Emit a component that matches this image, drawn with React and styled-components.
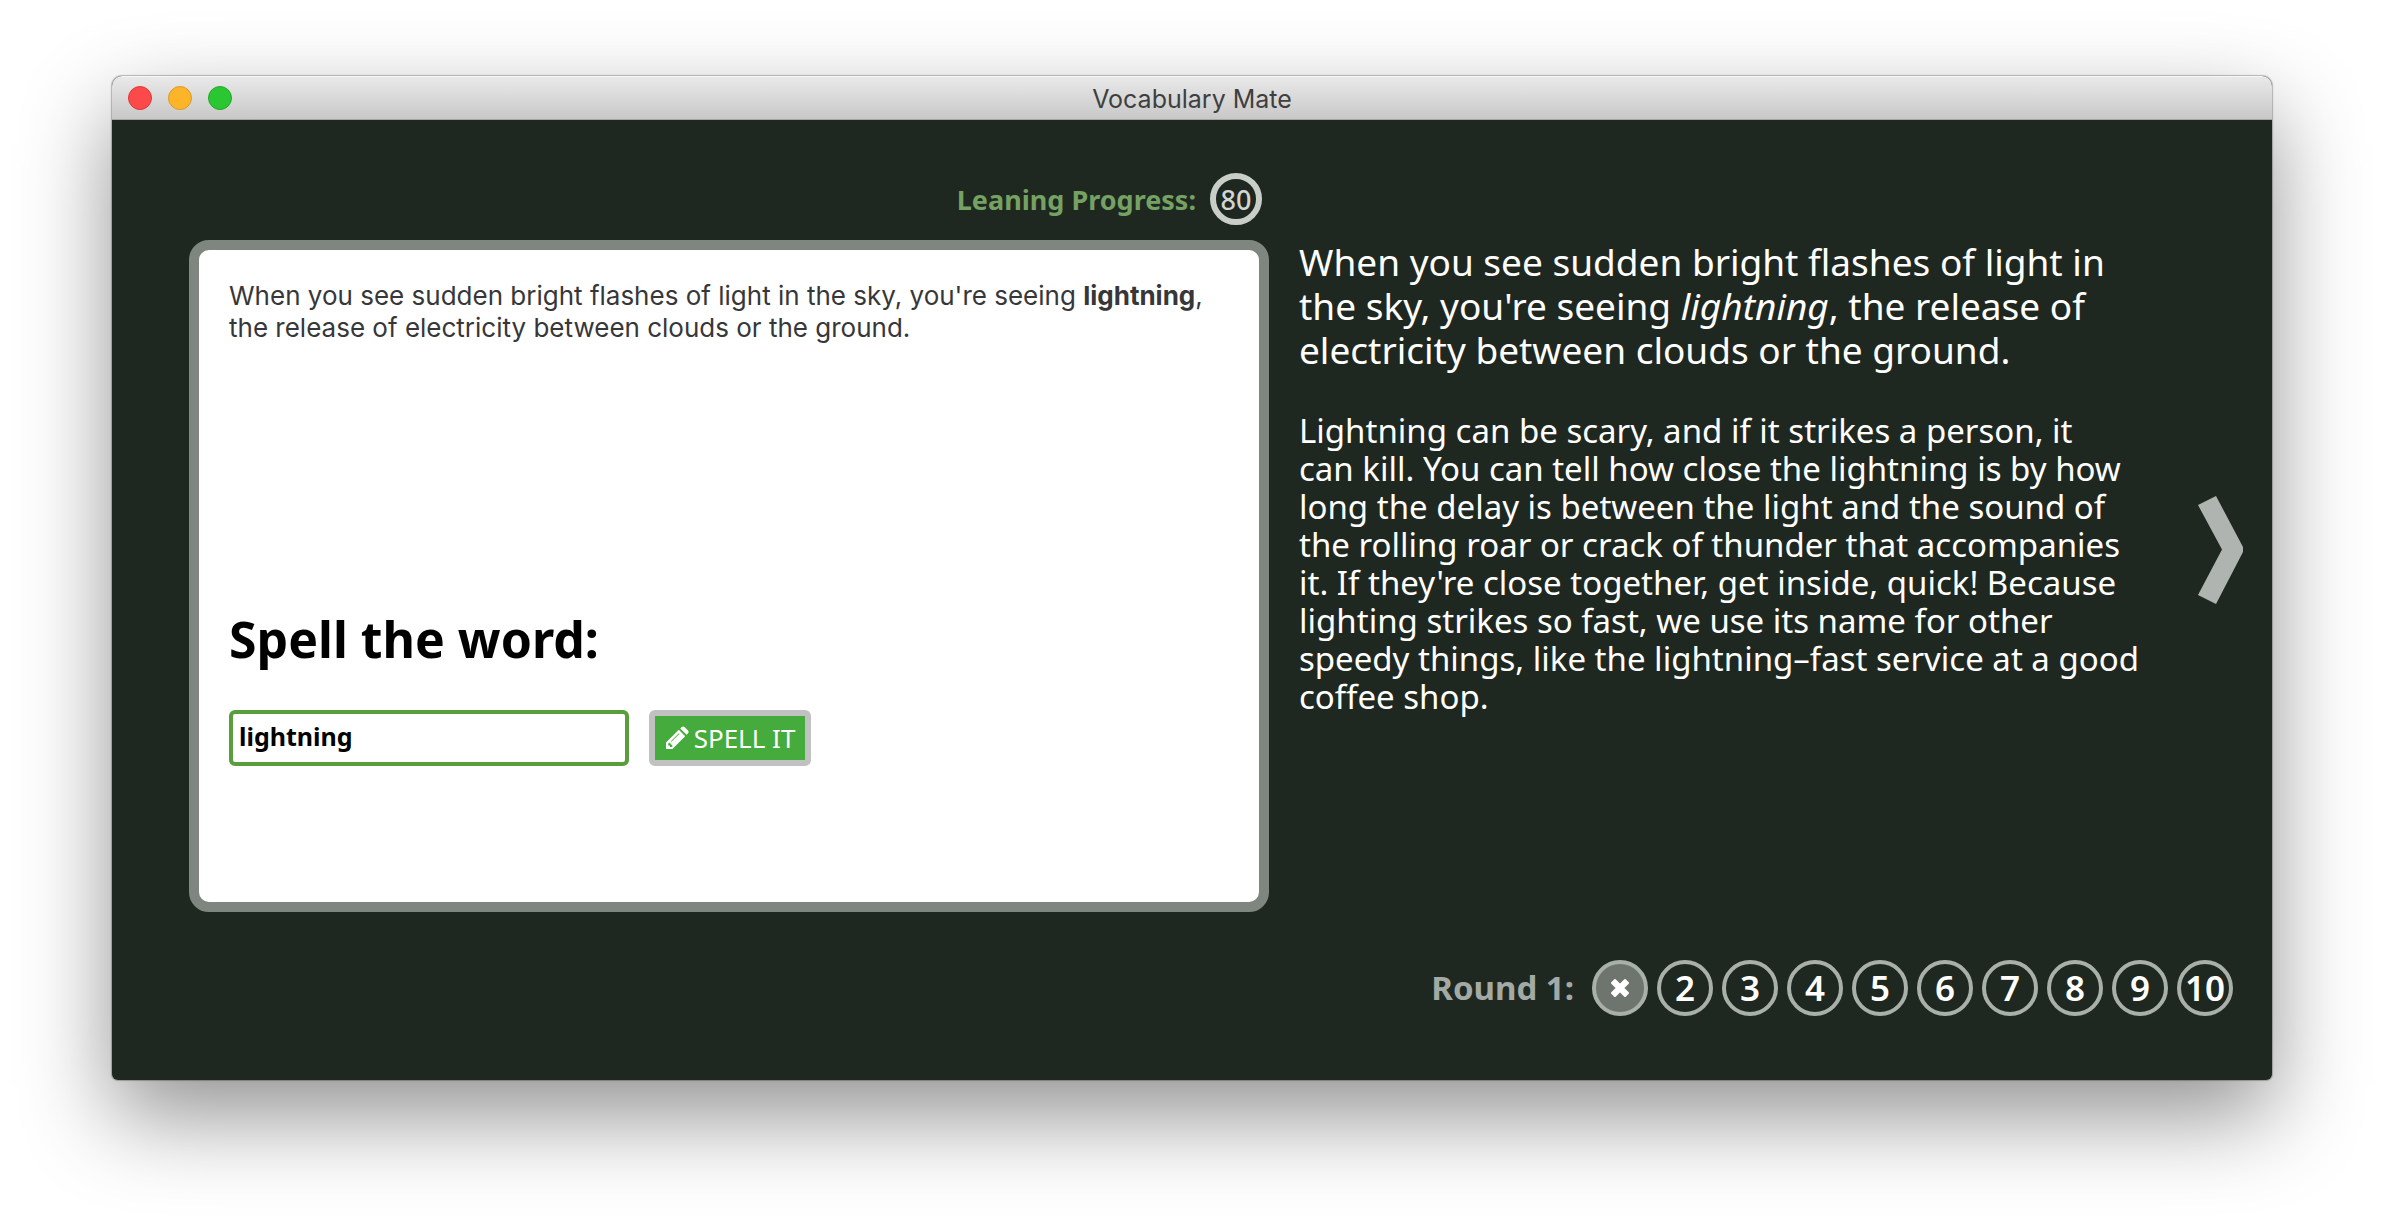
import React, { useState } from "react";
import styled, { createGlobalStyle } from "styled-components";

const GlobalStyle = createGlobalStyle`
  *, *::before, *::after { box-sizing: border-box; }
  body {
    margin: 0;
    background: #ffffff;
    font-family: "Noto Sans", "Open Sans", sans-serif;
  }
  h1, h2, p { margin: 0; }
`;

const Desktop = styled.div`
  min-height: 100vh;
  padding: 76px 112px 148px;
  display: flex;
`;

const Window = styled.main`
  flex: 1;
  min-width: 0;
  display: flex;
  flex-direction: column;
  overflow: hidden;
  border-radius: 10px 10px 6px 6px;
  background: #1f2820;
  box-shadow: 0 0 1px 1px rgba(0, 0, 0, 0.25), 0 36px 90px rgba(0, 0, 0, 0.43);
`;

const TitleBar = styled.header`
  height: 44px;
  padding: 0 16px;
  display: grid;
  grid-template-columns: 1fr auto 1fr;
  align-items: center;
  background: linear-gradient(#e9e9e9, #c8c8c8);
  border-top: 1px solid #f6f6f6;
  border-bottom: 1px solid #a4a4a4;
`;

const WindowButtons = styled.div`
  display: flex;
  gap: 16px;
`;

const WindowButton = styled.button`
  width: 24px;
  height: 24px;
  padding: 0;
  border: 1px solid ${(p) => p.$edge};
  border-radius: 50%;
  background: ${(p) => p.$fill};
`;

const Title = styled.h1`
  padding-top: 2px;
  font: 400 25px/40px Inter, sans-serif;
  color: #3f3f3f;
`;

const Body = styled.div`
  flex: 1;
  padding: 53px 29px 64px 77px;
  display: grid;
  grid-template-columns: minmax(0, 1080fr) minmax(0, 869fr) 45px;
  grid-template-rows: auto 1fr auto;
  column-gap: 30px;
`;

const Progress = styled.div`
  grid-column: 1;
  padding-right: 7px;
  margin-bottom: 15px;
  display: flex;
  justify-content: flex-end;
  align-items: center;
  gap: 14px;
  font-size: 27px;
  font-weight: 700;
  color: #75a163;
`;

const ProgressValue = styled.output`
  width: 52px;
  height: 52px;
  display: grid;
  place-items: center;
  border: 6px solid #c9cec9;
  border-radius: 50%;
  font-weight: 500;
  color: #d2d6d2;
`;

const Card = styled.section`
  grid-row: 2;
  grid-column: 1;
  padding: 30px 30px 136px;
  display: flex;
  flex-direction: column;
  justify-content: space-between;
  border: 10px solid #7f867f;
  border-radius: 20px;
  background: #ffffff;
`;

const Example = styled.p`
  font: 400 26px/32px Inter, sans-serif;
  color: #37373a;
`;

const SpellForm = styled.form`
  display: flex;
  flex-direction: column;
  gap: 36px;
`;

const Prompt = styled.label`
  font-size: 50px;
  line-height: 70px;
  font-weight: 700;
  color: #000000;
`;

const Controls = styled.div`
  display: flex;
  gap: 20px;
`;

const WordInput = styled.input`
  width: 400px;
  height: 56px;
  padding: 0 6px 4px;
  border: 4px solid #5a9e3c;
  border-radius: 6px;
  outline: none;
  background: #ffffff;
  font: 700 25px/32px "Noto Sans", "Open Sans", sans-serif;
  color: #000000;
`;

const SpellButton = styled.button`
  width: 162px;
  height: 56px;
  padding: 0;
  display: flex;
  justify-content: center;
  align-items: center;
  gap: 5px;
  border: 6px solid #c1c1c1;
  border-radius: 6px;
  background: #46ab3d;
  font: 400 26px/32px "Noto Sans", "Open Sans", sans-serif;
  color: #ffffff;
`;

const Explanation = styled.section`
  grid-row: 2;
  grid-column: 2;
  padding-right: 12px;
  display: flex;
  flex-direction: column;
  gap: 40px;
  color: #ffffff;
`;

const Lead = styled.p`
  font-size: 37px;
  line-height: 44px;
`;

const Detail = styled.p`
  font-size: 33px;
  line-height: 38px;
`;

const NextButton = styled.button`
  grid-row: 2;
  grid-column: 3;
  align-self: center;
  margin-bottom: 52px;
  padding: 0;
  border: 0;
  background: none;
  line-height: 0;
`;

const Rounds = styled.footer`
  grid-column: 1 / -1;
  margin-top: 48px;
  padding-right: 10px;
  display: flex;
  justify-content: flex-end;
  align-items: center;
  gap: 18px;
  font-size: 33px;
  line-height: 44px;
  font-weight: 700;
  color: #a3a9a4;
`;

const RoundList = styled.ol`
  margin: 0;
  padding: 0;
  display: flex;
  gap: 9px;
  list-style: none;
`;

const RoundItem = styled.li`
  width: 56px;
  height: 56px;
  display: flex;
  justify-content: center;
  align-items: center;
  border: 4px solid #a9afa9;
  border-radius: 50%;
  background: ${(p) => (p.$missed ? "#6d756e" : "transparent")};
  font-size: 35px;
  font-weight: 600;
  color: #ffffff;
`;

const Pencil = () => (
  <svg width="24" height="24" viewBox="0 0 24 24" aria-hidden="true">
    <path
      fill="#fff"
      fillRule="evenodd"
      d="M1 16.6 13.8 3.8l6.4 6.4L7.4 23H1zM3.2 17.8v1.6h1.7v1.7h1.6l1.2-1.2-3.3-3.3zM13.9 7.2l-8 8 .6.6 8-8zM15.2 2.4 16.700 1q1.400-1.200 2.800 0L23 4.500q1.200 1.400 0 2.800l-1.400 1.500z"
    />
  </svg>
);

const Cross = () => (
  <svg width="20" height="20" viewBox="0 0 20 20" aria-hidden="true">
    <path
      fill="#fff"
      stroke="#fff"
      strokeWidth="2"
      strokeLinejoin="round"
      d="M5 2 10 7 15 2 18 5 13 10 18 15 15 18 10 13 5 18 2 15 7 10 2 5z"
    />
  </svg>
);

const Chevron = () => (
  <svg width="45" height="110" viewBox="0 0 45 110" aria-hidden="true">
    <path fill="#afb4b0" d="M0 10 18 1 45 52v5L18 109 0 100 24 54.500z" />
  </svg>
);

const rounds = [1, 2, 3, 4, 5, 6, 7, 8, 9, 10];

export default function App() {
  const [word, setWord] = useState("lightning");

  return (
    <>
      <GlobalStyle />
      <Desktop>
        <Window>
          <TitleBar>
            <WindowButtons>
              <WindowButton aria-label="Close" $fill="#fc4a4a" $edge="#dc3838" />
              <WindowButton aria-label="Minimize" $fill="#fdb429" $edge="#d99a2b" />
              <WindowButton aria-label="Zoom" $fill="#2bc732" $edge="#25a82b" />
            </WindowButtons>
            <Title>Vocabulary Mate</Title>
          </TitleBar>
          <Body>
            <Progress>
              <span>Leaning Progress:</span>
              <ProgressValue>80</ProgressValue>
            </Progress>
            <Card>
              <Example>
                When you see sudden bright flashes of light in the sky, you're seeing{" "}
                <b>lightning</b>, the release of electricity between clouds or the ground.
              </Example>
              <SpellForm onSubmit={(e) => e.preventDefault()}>
                <Prompt htmlFor="word">Spell the word:</Prompt>
                <Controls>
                  <WordInput id="word" value={word} onChange={(e) => setWord(e.target.value)} />
                  <SpellButton type="submit">
                    <Pencil />
                    SPELL IT
                  </SpellButton>
                </Controls>
              </SpellForm>
            </Card>
            <Explanation>
              <Lead>
                When you see sudden bright flashes of light in <br />
                the sky, you're seeing <em>lightning</em>, the release of <br />
                electricity between clouds or the ground.
              </Lead>
              <Detail>
                Lightning can be scary, and if it strikes a person, it <br />
                can kill. You can tell how close the lightning is by how <br />
                long the delay is between the light and the sound of <br />
                the rolling roar or crack of thunder that accompanies <br />
                it. If they're close together, get inside, quick! Because <br />
                lighting strikes so fast, we use its name for other <br />
                speedy things, like the lightning–fast service at a good <br />
                coffee shop.
              </Detail>
            </Explanation>
            <NextButton type="button" aria-label="Next word">
              <Chevron />
            </NextButton>
            <Rounds>
              <span>Round 1:</span>
              <RoundList>
                {rounds.map((n) => (
                  <RoundItem key={n} $missed={n === 1}>
                    {n === 1 ? <Cross /> : n}
                  </RoundItem>
                ))}
              </RoundList>
            </Rounds>
          </Body>
        </Window>
      </Desktop>
    </>
  );
}
